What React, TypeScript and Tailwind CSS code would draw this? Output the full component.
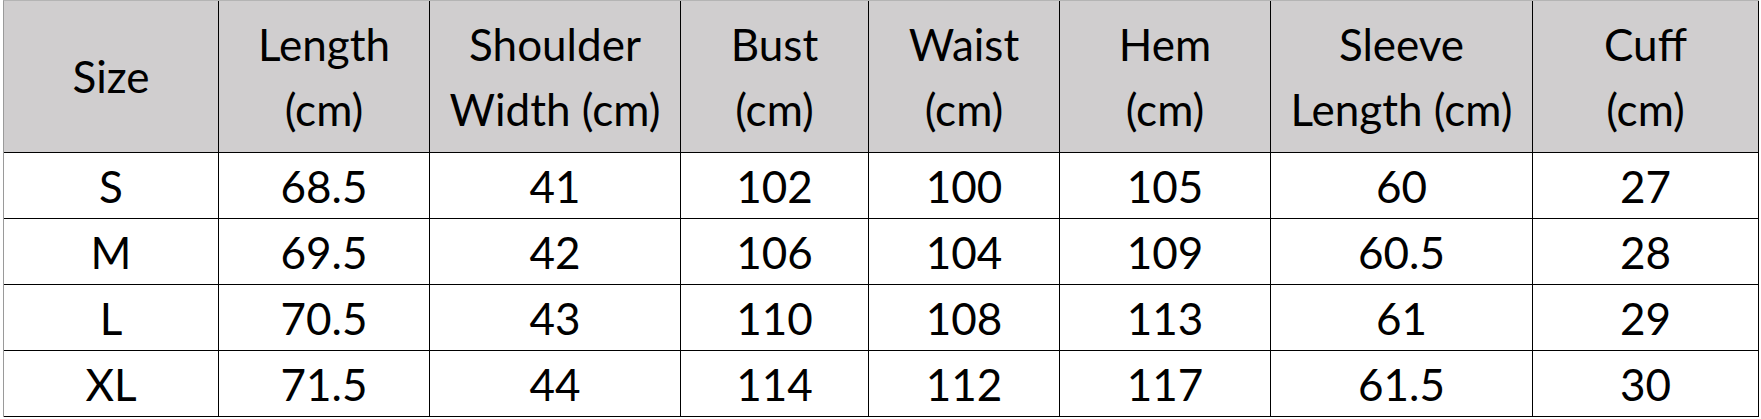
const headers = [
  ["Size"],
  ["Length", "(cm)"],
  ["Shoulder", "Width (cm)"],
  ["Bust", "(cm)"],
  ["Waist", "(cm)"],
  ["Hem", "(cm)"],
  ["Sleeve", "Length (cm)"],
  ["Cuff", "(cm)"],
];

const rows = [
  ["S", "68.5", "41", "102", "100", "105", "60", "27"],
  ["M", "69.5", "42", "106", "104", "109", "60.5", "28"],
  ["L", "70.5", "43", "110", "108", "113", "61", "29"],
  ["XL", "71.5", "44", "114", "112", "117", "61.5", "30"],
];

export default function App() {
  return (
    <main className="h-[419px] w-[1761px] bg-white pl-[3px] font-['Lato',_sans-serif] text-[44px] text-black">
      <div className="grid w-[1756px] grid-cols-[215px_211px_251px_188px_191px_211px_262px_226px] border-l border-t border-l-[#9a9a9a] border-t-[#b4b4b4]">
        {headers.map((lines, i) => (
          <div
            key={i}
            className="flex h-[152px] flex-col items-center justify-center border-b border-r border-black bg-[#d0cecf] leading-[65px]"
          >
            {lines.map((line) => (
              <span key={line}>{line}</span>
            ))}
          </div>
        ))}
        {rows.map((row) =>
          row.map((cell, j) => (
            <div
              key={row[0] + j}
              className="flex h-[66px] items-center justify-center border-b border-r border-black"
            >
              {cell}
            </div>
          ))
        )}
      </div>
    </main>
  );
}
